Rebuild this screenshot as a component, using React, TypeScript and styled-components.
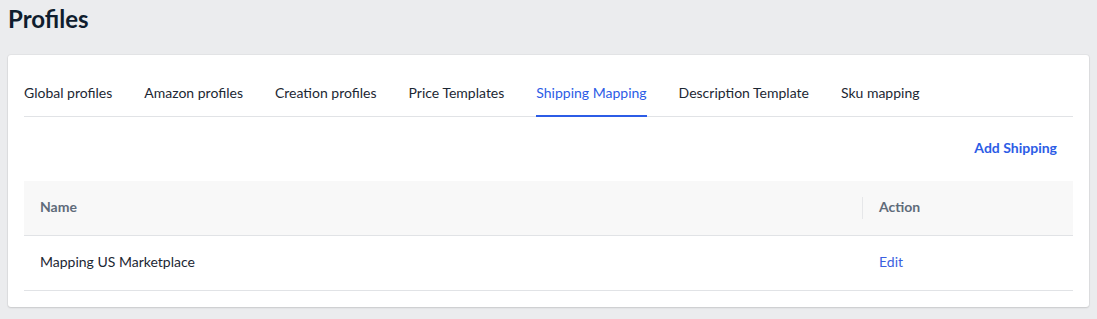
import styled, { createGlobalStyle } from 'styled-components'

const GlobalStyle = createGlobalStyle`
  body {
    margin: 0;
    background: #ebecee;
    font-family: Lato, 'Open Sans', sans-serif;
    color: #1c2733;
  }
`

const Page = styled('div')`
  padding: 4px 8px 12px;
`

const Title = styled('h1')`
  margin: 0 0 22px;
  font-size: 24px;
  line-height: 29px;
  font-weight: 700;
  color: #0f1d2e;
`

const Card = styled('section')`
  background: #fff;
  border-radius: 3px;
  box-shadow: 0 1px 2px rgba(0, 0, 0, 0.12), 0 0 0 1px rgba(0, 0, 0, 0.03);
  padding: 17px 16px 16px;
`

const TabList = styled('nav')`
  display: flex;
  gap: 32px;
  border-bottom: 1px solid #e1e3e6;
`

const Tab = styled('div')<{ $active?: boolean }>`
  height: 45px;
  display: flex;
  align-items: center;
  box-sizing: border-box;
  padding-bottom: 2px;
  font-size: 14px;
  color: ${({ $active }) => ($active ? '#2c5ce6' : '#1c2733')};
  border-bottom: 2px solid ${({ $active }) => ($active ? '#2c5ce6' : 'transparent')};
  margin-bottom: -1px;
  cursor: pointer;
`

const Actions = styled('div')`
  height: 64px;
  display: flex;
  align-items: center;
  justify-content: flex-end;
  padding-bottom: 3px;
  box-sizing: border-box;
`

const LinkButton = styled('button')`
  border: 0;
  background: none;
  font-family: inherit;
  font-size: 14px;
  font-weight: 700;
  color: #2c5ce6;
  padding: 0 16px;
  cursor: pointer;
`

const Table = styled('div')`
  display: grid;
  grid-template-columns: 839px 1fr;
`

const HeadCell = styled('div')<{ $divider?: boolean }>`
  position: relative;
  height: 55px;
  box-sizing: border-box;
  display: flex;
  align-items: center;
  padding: 0 16px 3px;
  background: #f8f8f8;
  border-bottom: 1px solid #e1e3e6;
  font-size: 14px;
  font-weight: 700;
  color: #5f6b7a;

  ${({ $divider }) =>
    $divider &&
    `&::before {
      content: '';
      position: absolute;
      left: -1px;
      top: 16px;
      height: 22px;
      width: 1px;
      background: #e6e7e9;
    }`}
`

const Cell = styled('div')`
  height: 55px;
  box-sizing: border-box;
  display: flex;
  align-items: center;
  padding: 0 16px 3px;
  border-bottom: 1px solid #e1e3e6;
  font-size: 14px;
  color: #1c2733;
`

const EditLink = styled('a')`
  color: #3b5fe0;
  text-decoration: none;
  cursor: pointer;
`

const tabs = [
  'Global profiles',
  'Amazon profiles',
  'Creation profiles',
  'Price Templates',
  'Shipping Mapping',
  'Description Template',
  'Sku mapping',
]

function App() {
  return (
    <Page>
      <GlobalStyle />
      <Title>Profiles</Title>
      <Card>
        <TabList>
          {tabs.map((t) => (
            <Tab key={t} $active={t === 'Shipping Mapping'}>
              {t}
            </Tab>
          ))}
        </TabList>

        <Actions>
          <LinkButton>Add Shipping</LinkButton>
        </Actions>

        <Table>
          <HeadCell>Name</HeadCell>
          <HeadCell $divider>Action</HeadCell>
          <Cell>Mapping US Marketplace</Cell>
          <Cell>
            <EditLink>Edit</EditLink>
          </Cell>
        </Table>
      </Card>
    </Page>
  )
}

export default App
